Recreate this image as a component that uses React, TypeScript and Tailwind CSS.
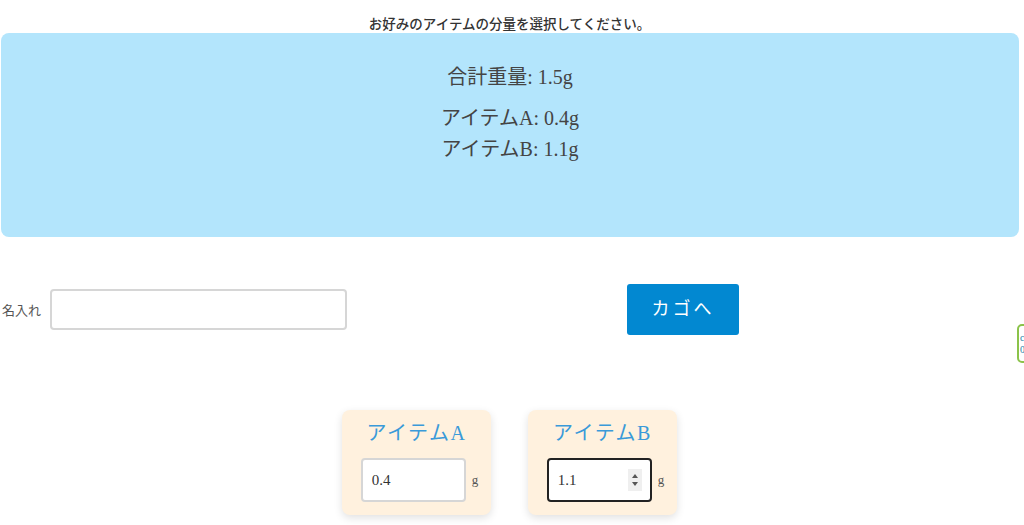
import { useState } from "react";

const FONT = { fontFamily: '"Liberation Serif", "Noto Sans CJK JP", serif' };

function ItemCard({ label, value, focused }: { label: string; value: string; focused?: boolean }) {
  return (
    <div className="w-[149px] h-[105px] bg-[#fff1de] rounded-lg shadow-[0_3px_8px_rgba(0,0,0,0.12)] flex flex-col items-center pt-[11px]">
      <div className="text-[20px] leading-[24px] tracking-[1.5px] text-[#3a9ad9]">{label}</div>
      <div className="flex items-end gap-[6px] mt-[13px] ml-[6px]">
        <div
          className={
            focused
              ? "w-[105px] h-[44px] bg-white border-2 border-[#222] rounded-[4px] flex items-center pl-[9px] pr-[8px]"
              : "w-[105px] h-[44px] bg-white border-2 border-[#d6d6d6] rounded-[4px] flex items-center pl-[9px] pr-[8px]"
          }
        >
          <span className="text-[15px] text-[#333] flex-1">{value}</span>
          {focused && (
            <div className="w-[14px] h-[22px] bg-[#efefef] flex flex-col items-center justify-center gap-[4px]">
              <div className="w-0 h-0 border-l-[3px] border-r-[3px] border-b-[4px] border-l-transparent border-r-transparent border-b-[#555]" />
              <div className="w-0 h-0 border-l-[3px] border-r-[3px] border-t-[4px] border-l-transparent border-r-transparent border-t-[#555]" />
            </div>
          )}
        </div>
        <span className="text-[13px] text-[#555] mb-[13px]">g</span>
      </div>
    </div>
  );
}

export default function App() {
  const [name, setName] = useState("");
  return (
    <div className="relative w-[1024px] h-[525px] overflow-hidden bg-white text-[#333]" style={FONT}>
      <div className="w-[1019px]">
        {/* Intro */}
        <p className="text-center text-[13.5px] leading-[16px] font-medium text-[#333] pt-[17px]">
          お好みのアイテムの分量を選択してください。
        </p>

        {/* Summary */}
        <div className="ml-[1px] h-[204px] bg-[#b3e5fc] rounded-lg flex flex-col items-center pt-[31px] text-[#444]">
          <p className="text-[20px] leading-[26px]">合計重量: 1.5g</p>
          <p className="text-[20px] leading-[31px] mt-[13px]">アイテムA: 0.4g</p>
          <p className="text-[20px] leading-[31px]">アイテムB: 1.1g</p>
        </div>

        {/* Name + cart */}
        <div className="flex items-center mt-[47px] h-[51px]">
          <span className="text-[13px] text-[#555] ml-[2px] mt-[2px]">名入れ</span>
          <input
            value={name}
            onChange={e => setName(e.target.value)}
            className="ml-[9px] w-[297px] h-[41px] border-2 border-[#d6d6d6] rounded-[4px] bg-white outline-none px-2 text-[14px]"
          />
          <button className="ml-[280px] w-[112px] h-[51px] bg-[#0288d1] rounded-[3px] text-white text-[18px] tracking-[3px]">
            カゴへ
          </button>
        </div>

        {/* Items */}
        <div className="flex justify-center gap-[37px] mt-[75px]">
          <ItemCard label="アイテムA" value="0.4" />
          <ItemCard label="アイテムB" value="1.1" focused />
        </div>
      </div>

      {/* floating widget edge */}
      <div className="absolute left-[1017px] top-[324px] w-[20px] h-[39px] border-2 border-[#8bc34a] rounded-[5px] bg-white flex flex-col justify-center pl-[1px] text-[10px] leading-[12px] text-[#1a7fa8]">
        <span>c</span>
        <span>0</span>
      </div>
    </div>
  );
}
